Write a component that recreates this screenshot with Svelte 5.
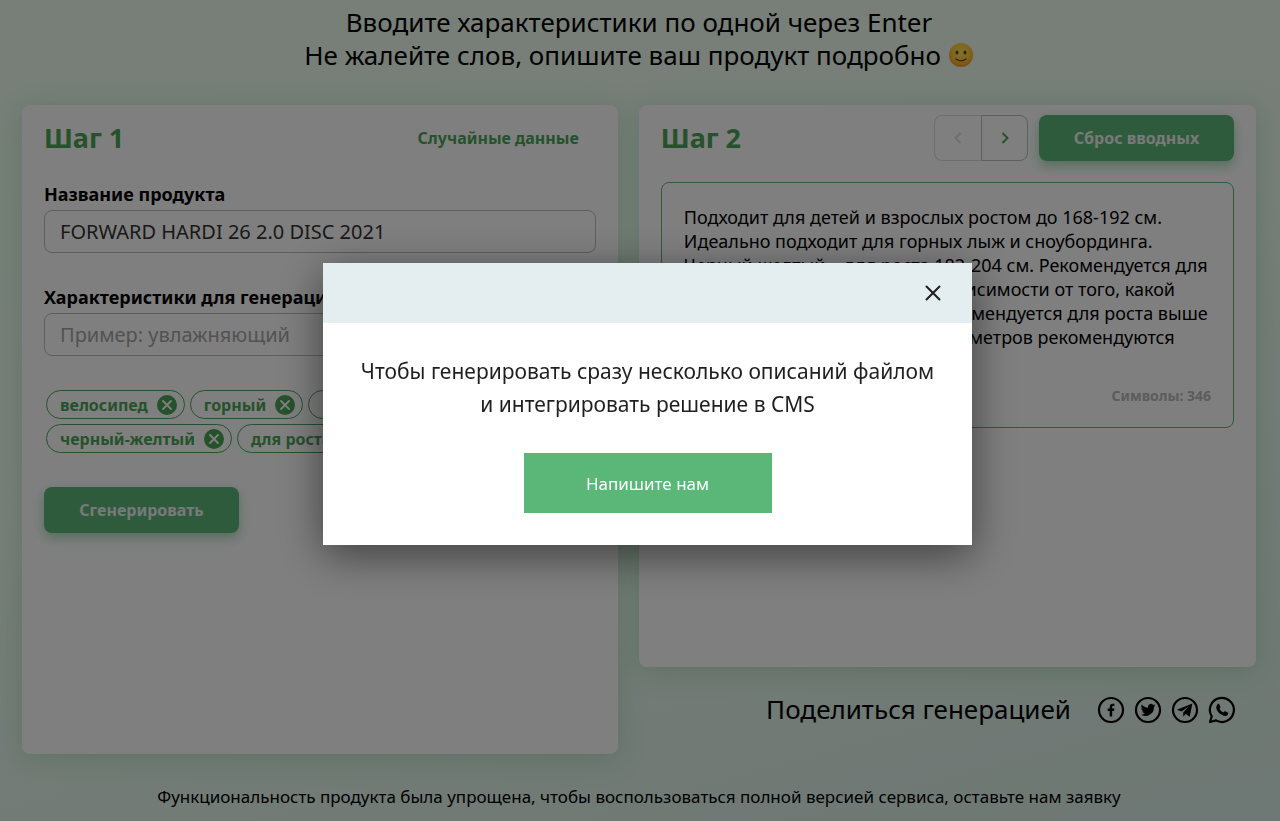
<script lang="ts">
	let productName = $state('FORWARD HARDI 26 2.0 DISC 2021');
	let feature = $state('');
	let modalOpen = $state(true);
	let tags = $state([
		'велосипед',
		'горный',
		'взрослый',
		'черный-желтый',
		'для роста 168-192'
	]);

	const result = [
		'Подходит для детей и взрослых ростом до 168-192 см.',
		'Идеально подходит для горных лыж и сноубординга.',
		'Черный-желтый – для роста 182-204 см. Рекомендуется для',
		'катания на любых склонах в зависимости от того, какой',
		'стиль вы обычно выберете. Рекомендуется для роста выше',
		'180 см. Также для роста до двух метров рекомендуются'
	];

	function addTag(event: Event) {
		event.preventDefault();
		const value = feature.trim();
		if (!value || tags.includes(value)) return;
		tags = [...tags, value];
		feature = '';
	}

	function removeTag(tag: string) {
		tags = tags.filter((t) => t !== tag);
	}
</script>

<div class="page">
	<header class="intro">
		<p>Вводите характеристики по одной через Enter</p>
		<p>
			Не жалейте слов, опишите ваш продукт подробно
			<svg class="smile" viewBox="0 0 26 26" role="img" aria-label="Улыбка">
				<defs>
					<radialGradient id="face" cx="50%" cy="38%" r="62%">
						<stop offset="0" stop-color="#ffe45e" />
						<stop offset="0.6" stop-color="#ffcb3d" />
						<stop offset="1" stop-color="#f59a1c" />
					</radialGradient>
				</defs>
				<circle cx="13" cy="13" r="12" fill="url(#face)" />
				<ellipse cx="9" cy="10.5" rx="1.4" ry="2" fill="#6b3d08" />
				<ellipse cx="17" cy="10.5" rx="1.4" ry="2" fill="#6b3d08" />
				<path d="M8 17q5 3.600 10 0" fill="none" stroke="#6b3d08" stroke-width="1.300" stroke-linecap="round" />
			</svg>
		</p>
	</header>

	<main class="steps">
		<section class="card card-input">
			<div class="card-head">
				<h2>Шаг 1</h2>
				<button class="link-btn" type="button">Случайные данные</button>
			</div>

			<div class="field">
				<label for="product">Название продукта</label>
				<input id="product" bind:value={productName} autocomplete="off" />
			</div>

			<form class="field" onsubmit={addTag}>
				<label for="feature">Характеристики для генерации</label>
				<input id="feature" bind:value={feature} placeholder="Пример: увлажняющий" autocomplete="off" />
			</form>

			<ul class="tags">
				{#each tags as tag (tag)}
					<li class="tag">
						{tag}
						<button type="button" onclick={() => removeTag(tag)} aria-label="Удалить {tag}">
							<svg viewBox="0 0 20 20">
								<circle cx="10" cy="10" r="10" fill="currentColor" />
								<path d="M6 6l8 8M14 6l-8 8" stroke="#fff" stroke-width="1.800" stroke-linecap="round" />
							</svg>
						</button>
					</li>
				{/each}
			</ul>

			<button class="btn" type="button">Сгенерировать</button>
		</section>

		<div class="output">
			<section class="card card-output">
				<div class="card-head">
					<h2>Шаг 2</h2>
					<div class="actions">
						<div class="pager">
							<button type="button" disabled aria-label="Назад">
								<svg viewBox="0 0 16 16"><path d="M10.500 3L5.500 8l5 5" /></svg>
							</button>
							<button type="button" aria-label="Вперед">
								<svg viewBox="0 0 16 16"><path d="M5.500 3l5 5-5 5" /></svg>
							</button>
						</div>
						<button class="btn" type="button">Сброс вводных</button>
					</div>
				</div>

				<div class="result">
					<p>{result.join('\n')}</p>
					<span class="count">Символы: 346</span>
				</div>
			</section>

			<div class="share">
				<span>Поделиться генерацией</span>
				<nav class="socials">
					<a href="#facebook" aria-label="Facebook">
						<svg viewBox="0 0 28 28">
							<circle cx="14" cy="14" r="12" />
							<path class="solid" d="M12.700 20.500V15h-2v-2.400h2v-1.700c0-2 1.200-3.200 3.100-3.200.7 0 1.300.1 1.600.1v2.100h-1.100c-.9 0-1.100.4-1.100 1.100v1.600h2.200L17 15h-1.800v5.500z" />
						</svg>
					</a>
					<a href="#twitter" aria-label="Twitter">
						<svg viewBox="0 0 28 28">
							<circle cx="14" cy="14" r="12" />
							<path class="solid" d="M21.500 9.400c-.5.3-1.100.4-1.700.5.600-.4 1.100-1 1.300-1.700-.6.4-1.200.6-1.900.7a3.050 3.050 0 0 0-5.200 2.800c-2.500-.1-4.800-1.300-6.300-3.200a3.100 3.100 0 0 0 1 4.100c-.5 0-1-.1-1.400-.4 0 1.500 1 2.700 2.400 3-.4.1-.9.1-1.300 0 .4 1.300 1.500 2.100 2.800 2.100A6.200 6.200 0 0 1 6.700 18.600 8.700 8.700 0 0 0 20 10.900c.6-.4 1.100-.9 1.500-1.500z" />
						</svg>
					</a>
					<a href="#telegram" aria-label="Telegram">
						<svg viewBox="0 0 28 28">
							<circle cx="14" cy="14" r="12" />
							<path class="solid" d="M21.400 7.500L5.800 13.700l4.900 1.800L18 10.300l-5.800 6.200.1 4.200 2.400-2.700 4 2.800z" />
						</svg>
					</a>
					<a href="#whatsapp" aria-label="WhatsApp">
						<svg viewBox="0 0 28 28">
							<path d="M2 26l1.700-5.700A12 12 0 1 1 8 24.400z" stroke-linejoin="round" />
							<path class="solid" d="M9.600 8.200c.5-.5 1.300-.5 1.600.1l1.200 2.500c.2.500-.1.900-.9 1.900.8 1.700 2.100 3 3.900 3.800 1-1.200 1.300-1.500 1.800-1.300l2.500 1.200c.6.3.6.8.4 1.500-.6 1.600-2.400 2.300-4 1.900-4-1-7.100-4-7.800-7.700-.2-1.500.3-2.900 1.300-3.900z" />
						</svg>
					</a>
				</nav>
			</div>
		</div>
	</main>

	<footer>Функциональность продукта была упрощена, чтобы воспользоваться полной версией сервиса, оставьте нам заявку</footer>
</div>

{#if modalOpen}
	<div class="overlay">
		<div class="modal" role="dialog" aria-modal="true" aria-labelledby="modal-text">
			<div class="modal-head">
				<button type="button" onclick={() => (modalOpen = false)} aria-label="Закрыть">
					<svg viewBox="0 0 16 16"><path d="M1.500 1.500l13 13M14.500 1.500l-13 13" /></svg>
				</button>
			</div>
			<div class="modal-body">
				<p id="modal-text">Чтобы генерировать сразу несколько описаний файлом<br />и интегрировать решение в CMS</p>
				<button class="modal-btn" type="button">Напишите нам</button>
			</div>
		</div>
	</div>
{/if}

<style>
	:global(body) {
		font-family: 'Noto Sans', 'Open Sans', sans-serif;
		color: #000;
	}

	.page {
		box-sizing: border-box;
		min-height: 100vh;
		padding: 6px 24px 12px 22px;
		background: linear-gradient(165deg, #effff0 0%, #eefdf0 45%, #dcf0e8 100%);
	}

	p,
	h2 {
		margin: 0;
	}

	button,
	input {
		box-sizing: border-box;
		font-family: inherit;
	}

	button {
		padding: 0;
		border: 0;
		background: none;
		cursor: pointer;
	}

	svg {
		display: block;
	}

	.intro {
		margin-bottom: 33px;
		font-size: 26px;
		line-height: 33px;
		text-align: center;
	}

	.smile {
		display: inline-block;
		width: 26px;
		height: 26px;
		vertical-align: -3px;
	}

	.steps {
		display: grid;
		grid-template-columns: minmax(0, 28fr) minmax(0, 29fr);
		gap: 21px;
	}

	.card {
		box-sizing: border-box;
		padding: 10px 22px 22px;
		border-radius: 8px;
		background: #fff;
		box-shadow: 0 4px 28px rgba(90, 183, 120, 0.3);
	}

	.card-input {
		min-height: 649px;
	}

	.card-output {
		min-height: 562px;
	}

	.card-head {
		display: flex;
		align-items: center;
		justify-content: space-between;
		height: 46px;
	}

	h2 {
		color: #4ba557;
		font-size: 27px;
		line-height: 32px;
	}

	.link-btn {
		margin-right: 17px;
		color: #4ba557;
		font-size: 16px;
		font-weight: 700;
	}

	.field {
		display: flex;
		flex-direction: column;
		gap: 4px;
		margin-top: 20px;
	}

	.card-head + .field {
		margin-top: 21px;
	}

	.field + .field {
		margin-top: 32px;
	}

	.field label {
		font-size: 18px;
		font-weight: 700;
		line-height: 24px;
	}

	.field input {
		width: 100%;
		height: 43px;
		padding: 0 15px;
		border: 1px solid #bdbdbd;
		border-radius: 8px;
		background: transparent;
		color: #333;
		font-size: 20px;
	}

	.field input::placeholder {
		color: #a5a5a5;
		opacity: 1;
	}

	.tags {
		display: flex;
		flex-wrap: wrap;
		gap: 5px;
		margin: 34px 0;
		padding: 0 2px;
		list-style: none;
	}

	.tag {
		display: flex;
		align-items: center;
		gap: 9px;
		box-sizing: border-box;
		height: 29px;
		padding: 0 7px 0 13px;
		border: 1px solid #4ba557;
		border-radius: 15px;
		color: #4ba557;
		font-size: 16px;
		font-weight: 700;
	}

	.tag button {
		color: #4ba557;
	}

	.tag svg {
		width: 20px;
		height: 20px;
	}

	.btn {
		width: 195px;
		height: 46px;
		border-radius: 8px;
		background: #5ab778;
		box-shadow: 0 5px 12px rgba(90, 183, 120, 0.5);
		color: #f2f2f2;
		font-size: 16px;
		font-weight: 700;
	}

	.actions {
		display: flex;
		gap: 11px;
	}

	.pager {
		display: flex;
	}

	.pager button {
		display: grid;
		place-items: center;
		width: 47px;
		height: 46px;
		border: 1px solid #bdbdbd;
		border-radius: 0 8px 8px 0;
		color: #4ba557;
	}

	.pager button:disabled {
		border-color: #dcdcdc;
		border-right: 0;
		border-radius: 8px 0 0 8px;
		color: #dcdcdc;
	}

	.pager svg {
		width: 16px;
		height: 16px;
		fill: none;
		stroke: currentColor;
		stroke-width: 2;
	}

	.result {
		display: flex;
		flex-direction: column;
		justify-content: space-between;
		box-sizing: border-box;
		min-height: 246px;
		margin-top: 21px;
		padding: 22px;
		border: 1px solid #5ab778;
		border-radius: 8px;
	}

	.result p {
		font-size: 18px;
		line-height: 24px;
		white-space: pre;
	}

	.count {
		align-self: flex-end;
		color: #b8b8b8;
		font-size: 14px;
		font-weight: 700;
		line-height: 18px;
	}

	.share {
		display: flex;
		align-items: center;
		justify-content: flex-end;
		gap: 26px;
		padding: 26px 20px 0;
		font-size: 26px;
		line-height: 33px;
	}

	.socials {
		display: flex;
		gap: 9px;
	}

	.socials a {
		color: #000;
	}

	.socials svg {
		width: 28px;
		height: 28px;
		fill: none;
		stroke: currentColor;
		stroke-width: 2.200;
	}

	.socials .solid {
		fill: currentColor;
		stroke: none;
	}

	footer {
		margin-top: 31px;
		font-size: 17px;
		line-height: 24px;
		text-align: center;
	}

	.overlay {
		position: fixed;
		inset: 0;
		display: grid;
		place-items: center;
		padding: 0 0 13px 15px;
		background: rgba(0, 0, 0, 0.5);
	}

	.modal {
		width: 100%;
		max-width: 649px;
		background: #fff;
		box-shadow: 0 10px 40px rgba(0, 0, 0, 0.5);
	}

	.modal-head {
		display: flex;
		align-items: center;
		justify-content: flex-end;
		height: 60px;
		padding: 0 31px;
		background: #e4edf0;
	}

	.modal-head svg {
		width: 16px;
		height: 16px;
		fill: none;
		stroke: #1f1f1f;
		stroke-width: 2;
		stroke-linecap: round;
	}

	.modal-body {
		display: flex;
		flex-direction: column;
		align-items: center;
		gap: 32px;
		padding: 32px;
		color: #1f1f1f;
		font-size: 21px;
		line-height: 33px;
		text-align: center;
	}

	.modal-btn {
		width: 248px;
		height: 60px;
		background: #5ab778;
		color: #fff;
		font-size: 17px;
	}
</style>
